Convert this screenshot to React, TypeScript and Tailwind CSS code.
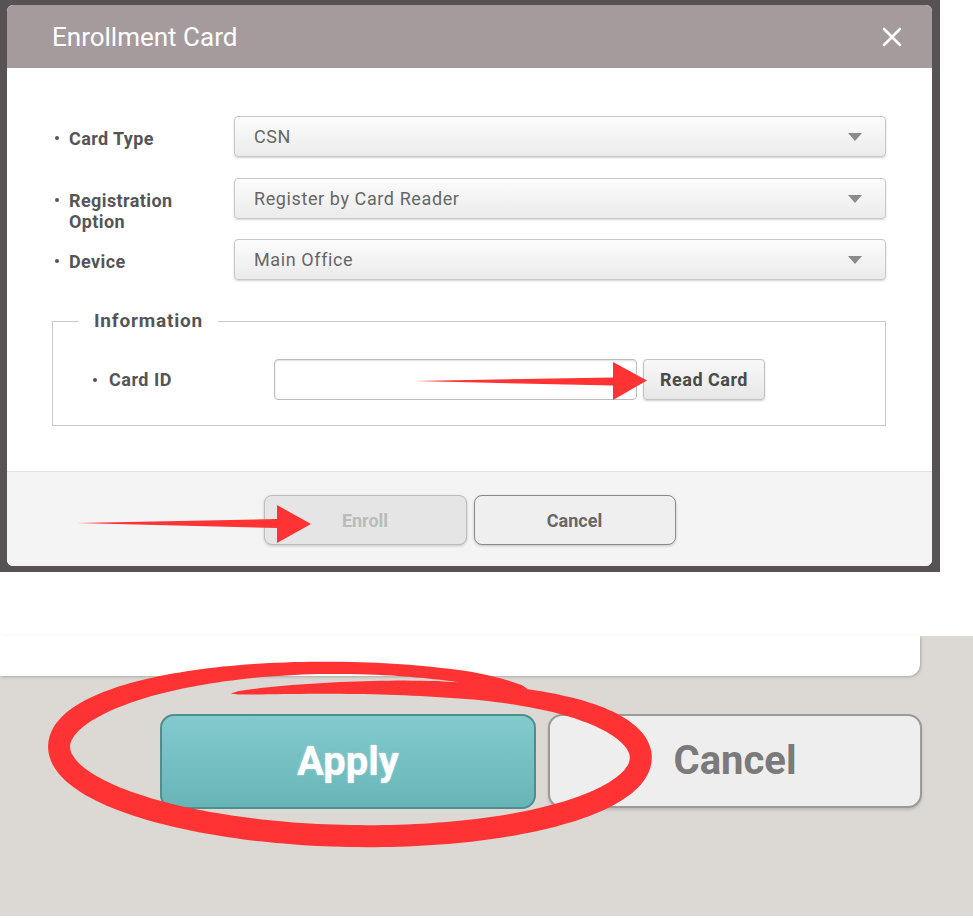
import React from "react";

function smooth(a: number, b: number, x: number) {
  const t = Math.min(1, Math.max(0, (x - a) / (b - a)));
  return t * t * (3 - 2 * t);
}

function ellipsePath(): string {
  const cx = 350;
  const cy = 752;
  const phi = 0.02;
  const N = 260;
  const t0 = -0.92;
  const t1 = -8.29;
  const center: [number, number][] = [];
  const widths: number[] = [];
  for (let i = 0; i <= N; i++) {
    const p = i / N;
    const th = t0 + (t1 - t0) * p;
    const s = smooth(0.7, 1, p);
    const rx = 291 - 6 * s;
    const ry = 84 - 22 * s;
    const x0 = rx * Math.cos(th);
    const y0 = ry * Math.sin(th);
    const x = cx + x0 * Math.cos(phi) - y0 * Math.sin(phi);
    const y = cy + x0 * Math.sin(phi) + y0 * Math.cos(phi);
    center.push([x, y]);
    const base = 12 + 10 * smooth(0.08, 0.28, p) - 6 * smooth(0.75, 0.9, p);
    const ts = Math.min(1, Math.sqrt(p / 0.03));
    const te = Math.min(1, Math.sqrt(Math.max(0, 1 - p) / 0.1));
    widths.push(base * ts * te);
  }
  const left: string[] = [];
  const right: string[] = [];
  for (let i = 0; i <= N; i++) {
    const a = center[Math.max(0, i - 1)];
    const b = center[Math.min(N, i + 1)];
    const dx = b[0] - a[0];
    const dy = b[1] - a[1];
    const len = Math.hypot(dx, dy) || 1;
    const nx = -dy / len;
    const ny = dx / len;
    const h = widths[i] / 2;
    left.push(`${(center[i][0] + nx * h).toFixed(1)},${(center[i][1] + ny * h).toFixed(1)}`);
    right.push(`${(center[i][0] - nx * h).toFixed(1)},${(center[i][1] - ny * h).toFixed(1)}`);
  }
  return "M" + left.join(" L") + " L" + right.reverse().join(" L") + " Z";
}

function Dot({ w = "w-[14px]" }: { w?: string }) {
  return (
    <div className={`h-[20px] ${w} flex items-center shrink-0`}>
      <div className="w-[4px] h-[4px] rounded-full bg-[#555]" />
    </div>
  );
}

function Select({ value }: { value: string }) {
  return (
    <div className="flex-1 h-[41px] rounded-[4px] border border-[#c8c8c8] bg-linear-to-b from-[#fcfcfc] to-[#ebebeb] shadow-[0_1px_2px_rgba(0,0,0,0.18)] flex items-center justify-between pl-[19px] pr-[23px]">
      <span className="text-[18px] text-[#676767] tracking-[0.6px]">{value}</span>
      <svg width="14" height="8" viewBox="0 0 14 8">
        <path d="M0 0H14L7 8Z" fill="#8b8b8b" />
      </svg>
    </div>
  );
}

function Row({ label, value, mt }: { label: React.ReactNode; value: string; mt: string }) {
  return (
    <div className={`flex h-[41px] ${mt}`}>
      <div className="w-[182px] pl-[3px] pt-[12px] flex items-start shrink-0">
        <Dot />
        <div className="text-[18px] font-bold leading-[21px] tracking-[0.4px] text-[#555]">{label}</div>
      </div>
      <Select value={value} />
    </div>
  );
}

export default function App() {
  const fontStyle = "font-['Roboto','Liberation_Sans',sans-serif]";
  return (
    <div className={`relative w-[973px] h-[918px] bg-white overflow-hidden ${fontStyle}`}>
      {/* top screenshot */}
      <div className="w-[940px] h-[572px] bg-[#575253] pt-[5px] pl-[7px]">
        <div className="w-[925px] h-[561px] rounded-[6px] overflow-hidden flex flex-col bg-white">
          <div className="h-[63px] bg-[#a59b9d] flex items-center justify-between pl-[45px] pr-[30px] shrink-0">
            <span className="text-[26px] leading-[30px] text-white">Enrollment Card</span>
            <svg width="20" height="20" viewBox="0 0 20 20">
              <path d="M2 2L18 18M18 2L2 18" stroke="white" strokeWidth="2.6" strokeLinecap="round" />
            </svg>
          </div>
          <div className="h-[403px] pt-[48px] pl-[45px] pr-[46px] shrink-0">
            <Row label="Card Type" value="CSN" mt="" />
            <Row
              label={
                <>
                  <div>Registration</div>
                  <div>Option</div>
                </>
              }
              value="Register by Card Reader"
              mt="mt-[21px]"
            />
            <Row label="Device" value="Main Office" mt="mt-[20px]" />
            <fieldset className="border border-[#c9c9c9] mt-[29px] p-0 m-0">
              <legend className="ml-[26px] px-[15px] text-[19px] font-bold leading-[24px] tracking-[0.8px] text-[#555]">
                Information
              </legend>
              <div className="pl-[40px] pt-[26px] pb-[25px] flex items-center">
                <div className="w-[181px] flex items-center shrink-0">
                  <Dot w="w-[16px]" />
                  <span className="text-[18px] font-bold leading-[20px] tracking-[0.5px] text-[#555]">Card ID</span>
                </div>
                <div className="w-[363px] h-[41px] rounded-[4px] border border-[#bcbcbc] bg-white shadow-[inset_0_1px_2px_rgba(0,0,0,0.12)]" />
                <button className="ml-[6px] w-[122px] h-[41px] rounded-[4px] border border-[#c2c2c2] bg-linear-to-b from-[#f8f8f8] to-[#e7e7e7] shadow-[0_1px_2px_rgba(0,0,0,0.2)] text-[18px] font-bold tracking-[0.5px] text-[#4a4a4a]">
                  Read Card
                </button>
              </div>
            </fieldset>
          </div>
          <div className="flex-1 border-t border-[#e2e2e2] bg-[#f4f4f4] flex justify-center items-start pt-[23px] gap-[7px]">
            <button className="w-[203px] h-[50px] rounded-[8px] border border-[#bdbdbd] bg-[#e5e5e5] shadow-[0_1px_3px_rgba(0,0,0,0.2)] text-[18px] font-bold text-[#bbbbbb]">
              Enroll
            </button>
            <button className="w-[202px] h-[50px] rounded-[8px] border border-[#8a8a8a] bg-[#efefef] shadow-[0_1px_3px_rgba(0,0,0,0.2)] text-[18px] font-bold text-[#686868]">
              Cancel
            </button>
          </div>
        </div>
      </div>

      {/* gap */}
      <div className="h-[64px]" />

      {/* bottom screenshot */}
      <div className="h-[280px] bg-[#dcd8d4] flex flex-col">
        <div className="w-[920px] h-[40px] bg-white rounded-br-[12px] shadow-[1px_1px_3px_rgba(0,0,0,0.22)]" />
        <div className="mt-[38px] pl-[160px] flex items-start gap-[12px]">
          <button className="w-[376px] h-[95px] rounded-[14px] border-2 border-[#4f8e8f] bg-linear-to-b from-[#82cacd] to-[#68b5b8] text-[40px] font-bold text-white [text-shadow:0_0_2px_rgba(255,255,255,0.6)]">
            Apply
          </button>
          <button className="w-[374px] h-[94px] rounded-[14px] border-2 border-[#9a9a9a] bg-[#eeeeee] shadow-[0_2px_3px_rgba(0,0,0,0.15)] text-[40px] font-bold text-[#7a7a7a]">
            Cancel
          </button>
        </div>
      </div>

      {/* annotations */}
      <svg
        className="absolute left-0 top-0 pointer-events-none"
        width="973"
        height="918"
        viewBox="0 0 973 918"
      >
        <path d="M414 381 L613 377.5 L613 362 L647 380.5 L613 400 L613 385.5 Z" fill="#ff3333" />
        <path d="M77 523 L277 519 L277 505 L311 524 L277 543 L277 528 Z" fill="#ff3333" />
        <path d={ellipsePath()} fill="#ff3333" />
      </svg>
    </div>
  );
}
